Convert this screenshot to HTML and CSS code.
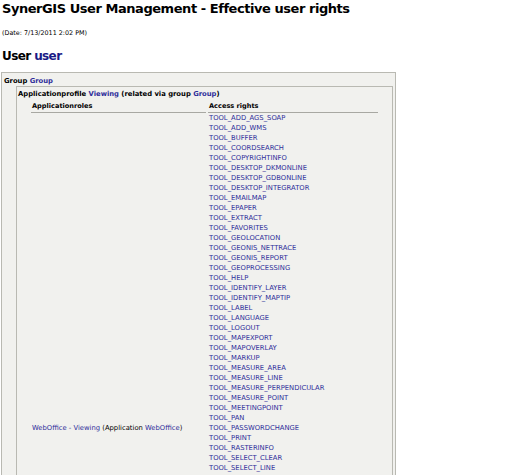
FILE: index.html
```html
<!DOCTYPE html>
<html>
<head>
<meta charset="utf-8">
<link rel="stylesheet" href="styles.css">
</head>
<body>
<h1 class="title">SynerGIS User Management - Effective user rights</h1>
<div class="date">(Date: 7/13/2011 2:02 PM)</div>
<h2 class="user">User <a class="hlink" href="#">user</a></h2>
<div class="group">
  <div class="group-title">Group <a class="link" href="#">Group</a></div>
  <div class="profile">
    <div class="profile-title">Applicationprofile <a class="link" href="#">Viewing</a> (related via group <a class="link" href="#">Group</a>)</div>
    <table class="rights">
      <thead>
        <tr><th class="c1">Applicationroles</th><th class="c2">Access rights</th></tr>
      </thead>
      <tbody>
        <tr><td class="role" rowspan="63"><a class="link" href="#">WebOffice - Viewing</a> (Application <a class="link" href="#">WebOffice</a>)</td><td><a class="link" href="#">TOOL_ADD_AGS_SOAP</a></td></tr>
        <tr><td><a class="link" href="#">TOOL_ADD_WMS</a></td></tr>
        <tr><td><a class="link" href="#">TOOL_BUFFER</a></td></tr>
        <tr><td><a class="link" href="#">TOOL_COORDSEARCH</a></td></tr>
        <tr><td><a class="link" href="#">TOOL_COPYRIGHTINFO</a></td></tr>
        <tr><td><a class="link" href="#">TOOL_DESKTOP_DKMONLINE</a></td></tr>
        <tr><td><a class="link" href="#">TOOL_DESKTOP_GDBONLINE</a></td></tr>
        <tr><td><a class="link" href="#">TOOL_DESKTOP_INTEGRATOR</a></td></tr>
        <tr><td><a class="link" href="#">TOOL_EMAILMAP</a></td></tr>
        <tr><td><a class="link" href="#">TOOL_EPAPER</a></td></tr>
        <tr><td><a class="link" href="#">TOOL_EXTRACT</a></td></tr>
        <tr><td><a class="link" href="#">TOOL_FAVORITES</a></td></tr>
        <tr><td><a class="link" href="#">TOOL_GEOLOCATION</a></td></tr>
        <tr><td><a class="link" href="#">TOOL_GEONIS_NETTRACE</a></td></tr>
        <tr><td><a class="link" href="#">TOOL_GEONIS_REPORT</a></td></tr>
        <tr><td><a class="link" href="#">TOOL_GEOPROCESSING</a></td></tr>
        <tr><td><a class="link" href="#">TOOL_HELP</a></td></tr>
        <tr><td><a class="link" href="#">TOOL_IDENTIFY_LAYER</a></td></tr>
        <tr><td><a class="link" href="#">TOOL_IDENTIFY_MAPTIP</a></td></tr>
        <tr><td><a class="link" href="#">TOOL_LABEL</a></td></tr>
        <tr><td><a class="link" href="#">TOOL_LANGUAGE</a></td></tr>
        <tr><td><a class="link" href="#">TOOL_LOGOUT</a></td></tr>
        <tr><td><a class="link" href="#">TOOL_MAPEXPORT</a></td></tr>
        <tr><td><a class="link" href="#">TOOL_MAPOVERLAY</a></td></tr>
        <tr><td><a class="link" href="#">TOOL_MARKUP</a></td></tr>
        <tr><td><a class="link" href="#">TOOL_MEASURE_AREA</a></td></tr>
        <tr><td><a class="link" href="#">TOOL_MEASURE_LINE</a></td></tr>
        <tr><td><a class="link" href="#">TOOL_MEASURE_PERPENDICULAR</a></td></tr>
        <tr><td><a class="link" href="#">TOOL_MEASURE_POINT</a></td></tr>
        <tr><td><a class="link" href="#">TOOL_MEETINGPOINT</a></td></tr>
        <tr><td><a class="link" href="#">TOOL_PAN</a></td></tr>
        <tr><td><a class="link" href="#">TOOL_PASSWORDCHANGE</a></td></tr>
        <tr><td><a class="link" href="#">TOOL_PRINT</a></td></tr>
        <tr><td><a class="link" href="#">TOOL_RASTERINFO</a></td></tr>
        <tr><td><a class="link" href="#">TOOL_SELECT_CLEAR</a></td></tr>
        <tr><td><a class="link" href="#">TOOL_SELECT_LINE</a></td></tr>
        <tr><td><a class="link" href="#">TOOL_SELECT_POINT</a></td></tr>
        <tr><td><a class="link" href="#">TOOL_SELECT_POLYGON</a></td></tr>
        <tr><td><a class="link" href="#">TOOL_SELECT_RECTANGLE</a></td></tr>
        <tr><td><a class="link" href="#">TOOL_SELECT_SHOWRESULTS</a></td></tr>
        <tr><td><a class="link" href="#">TOOL_SELECTION_BUFFER</a></td></tr>
        <tr><td><a class="link" href="#">TOOL_SERVICES</a></td></tr>
        <tr><td><a class="link" href="#">TOOL_SESSIONSAVE</a></td></tr>
        <tr><td><a class="link" href="#">TOOL_SETTINGS</a></td></tr>
        <tr><td><a class="link" href="#">TOOL_SKETCH</a></td></tr>
        <tr><td><a class="link" href="#">TOOL_SNAP</a></td></tr>
        <tr><td><a class="link" href="#">TOOL_STARTMAP</a></td></tr>
        <tr><td><a class="link" href="#">TOOL_STREETVIEW</a></td></tr>
        <tr><td><a class="link" href="#">TOOL_SWIPE</a></td></tr>
        <tr><td><a class="link" href="#">TOOL_TOC</a></td></tr>
        <tr><td><a class="link" href="#">TOOL_TOC_LEGEND</a></td></tr>
        <tr><td><a class="link" href="#">TOOL_TRANSPARENCY</a></td></tr>
        <tr><td><a class="link" href="#">TOOL_UPLOAD</a></td></tr>
        <tr><td><a class="link" href="#">TOOL_USERGUIDE</a></td></tr>
        <tr><td><a class="link" href="#">TOOL_VIEWER</a></td></tr>
        <tr><td><a class="link" href="#">TOOL_ZOOM_FULL</a></td></tr>
        <tr><td><a class="link" href="#">TOOL_ZOOM_IN</a></td></tr>
        <tr><td><a class="link" href="#">TOOL_ZOOM_LAYER</a></td></tr>
        <tr><td><a class="link" href="#">TOOL_ZOOM_NEXT</a></td></tr>
        <tr><td><a class="link" href="#">TOOL_ZOOM_OUT</a></td></tr>
        <tr><td><a class="link" href="#">TOOL_ZOOM_PREVIOUS</a></td></tr>
        <tr><td><a class="link" href="#">TOOL_ZOOM_SCALE</a></td></tr>
        <tr><td><a class="link" href="#">TOOL_ZOOM_SELECTION</a></td></tr>
      </tbody>
    </table>
  </div>
</div>
</body>
</html>
```
FILE: styles.css
```css
html, body {
  margin: 0;
  padding: 0;
  background: #ffffff;
}
body {
  font-family: "DejaVu Sans", Verdana, sans-serif;
  color: #000000;
  padding: 1px 0 0 1px;
}
.title {
  font-size: 13px;
  letter-spacing: -0.45px;
  font-weight: bold;
  margin: 0 0 0 1px;
  line-height: 16px;
}
.date {
  font-size: 6.4px;
  margin: 12px 0 0 1px;
  line-height: 8px;
}
.user {
  font-size: 12px;
  letter-spacing: -0.6px;
  font-weight: bold;
  margin: 11px 0 0 1px;
  line-height: 16px;
}
.hlink {
  color: #1a1a86;
  text-decoration: none;
}
.link {
  color: #2e2e9a;
  text-decoration: none;
}
.group {
  margin-top: 8px;
  width: 390px;
  border: 1px solid #b9b9b2;
  background: #f1f1ee;
  padding: 0 2px 0 1px;
}
.group-title {
  font-size: 6.8px;
  font-weight: bold;
  line-height: 10px;
  padding: 3px 0 0 1px;
}
.profile {
  margin: 0 0 0 13px;
  border: 1px solid #b9b9b2;
  padding: 2px 0 0 1px;
}
.profile-title {
  font-size: 6.8px;
  font-weight: bold;
  line-height: 10px;
}
.rights {
  margin-left: 11px;
  border-collapse: separate;
  border-spacing: 2px 0;
  font-size: 6.8px;
}
.rights th {
  text-align: left;
  font-weight: bold;
  font-size: 6.6px;
  line-height: 10px;
  padding: 2px 1px 1px;
  border-bottom: 1px solid #a8a8a2;
}
.c1 { width: 173px; }
.c2 { width: 168px; }
.rights td {
  line-height: 10px;
  padding: 0 1px;
  white-space: nowrap;
}
.rights td.role {
  vertical-align: middle;
}
```
